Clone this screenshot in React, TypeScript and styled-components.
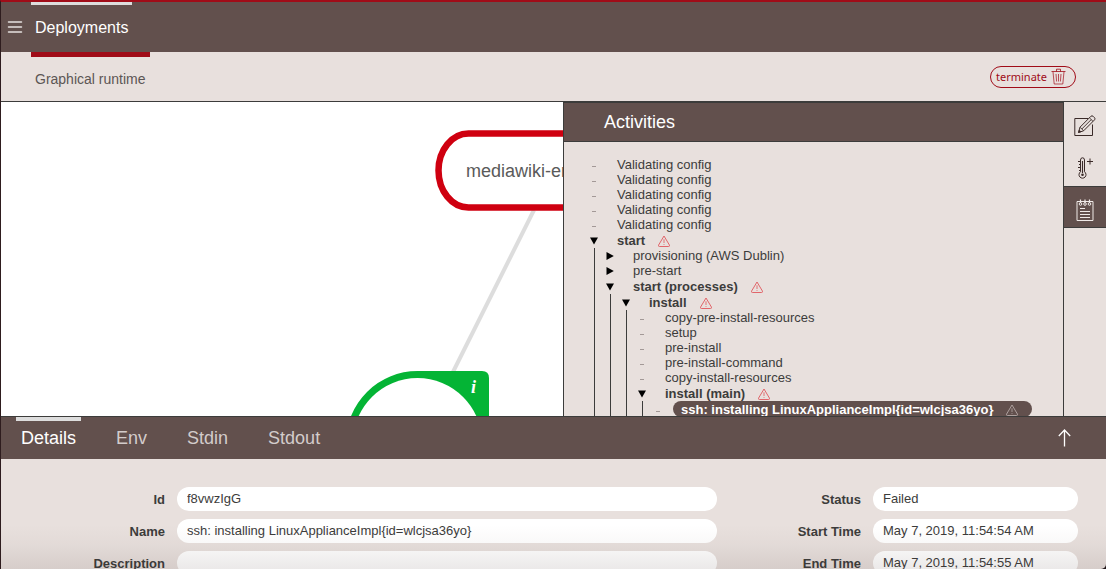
import React from "react";
import styled, { createGlobalStyle, css } from "styled-components";

const brown = "#62504d";
const sand = "#e8e0dd";
const line = "#3c3c3b";
const red = "#a00c18";

const GlobalStyle = createGlobalStyle`
  * { box-sizing: border-box; }
  html { background: #1d1416; }
  body { margin: 0; overflow: hidden; }
  body, button, input { font-family: "Liberation Sans", Arial, sans-serif; }
  button { margin: 0; padding: 0; border: 0; background: none; color: inherit; cursor: pointer; }
  ul { list-style: none; margin: 0; padding: 0; }
  svg { display: block; flex: none; }
`;

const Page = styled.div`
  display: grid;
  grid-template-rows: auto auto minmax(0, 1fr) 153px;
  height: 100vh;
  overflow: hidden;
  border-top: 2px solid ${red};
  border-left: 1px solid #2e1c1e;
  border-bottom-right-radius: 5px;
  background: ${sand};
  color: ${line};
`;

const TopBar = styled.header`
  display: flex;
  height: 50px;
  background: ${brown};
  color: #fff;
`;

const MenuButton = styled.button`
  width: 30px;
  padding-left: 6px;
`;

const NavLink = styled.a`
  padding: 0 4px;
  border-top: 3px solid #ddd;
  font-size: 16px;
  line-height: 46px;
  color: #fff;
  text-decoration: none;
`;

const SubBar = styled.nav`
  display: flex;
  justify-content: space-between;
  height: 50px;
  padding: 0 30px;
  border-bottom: 1px solid ${line};
`;

const SubLink = styled.a`
  padding: 0 4px;
  border-top: 5px solid ${red};
  font-size: 14px;
  line-height: 44px;
  color: #5c5654;
  text-decoration: none;
`;

const TerminateButton = styled.button`
  display: flex;
  align-items: center;
  align-self: center;
  gap: 4px;
  height: 22px;
  padding: 0 9px 0 5px;
  border: 1px solid ${red};
  border-radius: 11px;
  color: ${red};
  font-family: "Noto Sans", sans-serif;
  font-size: 11px;
`;

const Workspace = styled.main`
  display: grid;
  grid-template-columns: minmax(0, 1fr) 501px 42px;
  min-height: 0;
`;

const Canvas = styled.section`
  overflow: hidden;
  background: #fff;
`;

const Activities = styled.section`
  overflow: hidden;
  border: 1px solid ${line};
  border-bottom: 0;
`;

const ActivitiesTitle = styled.h2`
  margin: 0;
  padding-left: 40px;
  border-bottom: 1px solid ${line};
  background: ${brown};
  color: #fff;
  font-size: 18px;
  font-weight: 400;
  line-height: 38px;
`;

const Tree = styled.ul`
  padding: 15px 0 0 26px;
`;

const Branch = styled.ul`
  margin-left: 4px;
  padding-left: 11px;
  border-left: 1px solid ${line};
`;

const Row = styled.div<{ $alert?: boolean }>`
  display: flex;
  align-items: flex-end;
  height: ${(p) => (p.$alert ? 16 : 15)}px;
  font-size: 13px;
  font-weight: ${(p) => (p.$alert ? 700 : 400)};
  line-height: 15px;
  white-space: nowrap;
`;

const Marker = styled.span`
  display: flex;
  align-items: center;
  justify-content: center;
  width: 8px;
  height: 15px;
  color: #8f8583;
  font-weight: 400;
`;

const Label = styled.span<{ $selected?: boolean }>`
  display: flex;
  align-items: center;
  gap: 13px;
  height: 15px;
  margin-left: 19px;
  ${(p) =>
    p.$selected &&
    css`
      height: 16px;
      margin-left: 11px;
      padding: 0 14px 0 8px;
      border-radius: 8px;
      background: ${brown};
      color: #fff;
    `}
`;

const ToolRail = styled.aside`
  display: flex;
  flex-direction: column;
`;

const ToolButton = styled.button<{ $active?: boolean }>`
  display: flex;
  align-items: center;
  justify-content: center;
  height: 42px;
  padding-top: 6px;
  color: #3a2a28;
  ${(p) =>
    p.$active &&
    css`
      border: solid ${line};
      border-width: 1px 0;
      background: ${brown};
      color: #f0eae8;
    `}
`;

const Drawer = styled.section`
  position: relative;
  overflow: hidden;
  border-top: 1px solid ${line};
`;

const DrawerBar = styled.div`
  display: flex;
  align-items: stretch;
  gap: 30px;
  height: 42px;
  padding: 0 35px 0 15px;
  background: ${brown};
`;

const Tab = styled.button<{ $active?: boolean }>`
  padding: 0 5px 4px;
  border-top: 4px solid ${(p) => (p.$active ? "#ddd" : "transparent")};
  color: ${(p) => (p.$active ? "#fff" : "#d3cccb")};
  font-size: 18px;
`;

const ExpandButton = styled.button`
  margin-left: auto;
  color: #fff;
`;

const Form = styled.form`
  display: flex;
  padding: 28px 28px 0 0;
`;

const Fields = styled.div<{ $labels: number; $basis?: number }>`
  display: grid;
  flex: ${(p) => (p.$basis ? `0 0 ${p.$basis}px` : "1")};
  grid-template-columns: ${(p) => p.$labels}px minmax(0, 1fr);
  grid-auto-rows: 24px;
  gap: 8px 12px;
  align-content: start;
`;

const FieldLabel = styled.label`
  font-size: 13px;
  font-weight: 700;
  line-height: 26px;
  text-align: right;
`;

const FieldInput = styled.input`
  width: 100%;
  height: 24px;
  padding: 0 10px 2px;
  border: 0;
  border-radius: 12px;
  background: #fff;
  color: ${line};
  font-size: 13px;
`;

const Shade = styled.div`
  position: absolute;
  inset: auto 0 0;
  height: 44px;
  background: linear-gradient(rgba(60, 40, 36, 0), rgba(60, 40, 36, 0.03) 45%, rgba(60, 40, 36, 0.1));
  pointer-events: none;
`;

const WarningIcon = ({ color = "#e0575c" }: { color?: string }) => (
  <svg width="12" height="13" viewBox="0 0 12 13" fill="none" stroke={color} strokeLinejoin="round">
    <path d="M6 2 L11.5 11.2 Q11.7 12.5 10.7 12.5 H1.3 Q.3 12.5 .5 11.2 Z" strokeWidth=".9" />
    <path d="M6 5.3 V9 M6 10.2 V11" strokeWidth=".8" />
  </svg>
);

const Triangle = ({ open }: { open: boolean }) => (
  <svg width="8" height="8" viewBox="0 0 8 8" fill="#000">
    <path d={open ? "M0 .5 H8 L4 7.5 Z" : "M.5 0 V8 L7.8 4 Z"} />
  </svg>
);

const Dash = () => (
  <svg width="8" height="8" viewBox="0 0 8 8" stroke="#a39997">
    <path d="M2 5.5 H6" />
  </svg>
);

const TrashIcon = () => (
  <svg width="15" height="17" viewBox="0 0 15 17" fill="none" stroke={red}>
    <path d="M.5 3.5 H14.5 M5.5 3.5 V1.2 H9.5 V3.5" strokeWidth=".8" />
    <path d="M2 3.8 L3.2 16 H11.8 L13 3.8 M5 6 L5.6 13.5 M7.5 6 V13.5 M10 6 L9.4 13.5" strokeWidth=".7" />
  </svg>
);

const EditIcon = () => (
  <svg width="22" height="22" viewBox="0 0 22 22" fill="none" stroke="currentColor" strokeWidth="1">
    <path d="M14 3.5 H.8 V20.5 H18.5 V9.5" />
    <path d="M4.5 17.5 L6 12.2 L17 1.2 Q18 .4 19 1.2 L20.6 2.8 Q21.4 3.8 20.6 4.8 L9.6 15.8 Z" />
    <path d="M6 12.2 L9.6 15.8 M15.4 2.8 L19 6.4 M7.8 14 L17.2 4.6" strokeWidth=".9" />
    <path d="M4.5 17.5 L5.2 15 L7 16.8 Z" fill="currentColor" strokeWidth=".6" />
  </svg>
);

const ThermometerIcon = () => (
  <svg width="18" height="22" viewBox="0 0 18 22" fill="none" stroke="currentColor" strokeWidth="1">
    <path d="M4.5 14.8 V3 Q4.5 .8 6.5 .8 Q8.5 .8 8.5 3 V14.8 A3.5 3.5 0 1 1 4.5 14.8 Z" />
    <path d="M6.5 4 V16" strokeWidth="1.1" />
    <path d="M2 4.5 H4.5 M3 7.5 H4.5 M2 10.5 H4.5 M3 13.5 H4.5 M11 4.5 H17 M14 1.5 V7.5" />
    <circle cx="6.5" cy="17.8" r="1.3" fill="currentColor" stroke="none" />
  </svg>
);

const NotepadIcon = () => (
  <svg width="18" height="22" viewBox="0 0 18 22" fill="none" stroke="currentColor" strokeWidth="1">
    <path d="M1 2.5 H17 V21.5 H1 Z" />
    <path d="M4 9.5 H9 M4 12.5 H14 M4 15.5 H14 M4 18.5 H14" />
    <path d="M4.5 4 V.5 M9 4 V.5 M13.5 4 V.5" strokeWidth="1.2" />
    <circle cx="4.5" cy="5" r="1.3" />
    <circle cx="9" cy="5" r="1.3" />
    <circle cx="13.5" cy="5" r="1.3" />
  </svg>
);

const RuntimeGraph = () => (
  <svg width="700" height="420" viewBox="1 102 700 420" role="img" aria-label="Graphical runtime">
    <path d="M534 210 L453 372" stroke="#ddd" strokeWidth="4" />
    <rect x="438.5" y="133.5" width="240" height="74" rx="30" ry="37" fill="#fff" stroke="#cf0010" strokeWidth="6.5" />
    <text x="466" y="177" fontFamily="Liberation Sans, Arial, sans-serif" fontSize="18" fill="#5a5a5a">
      mediawiki-entity
    </text>
    <path d="M417.5 371 H482 Q489 371 489 378 V443 A71.5 71.5 0 1 1 417.5 371 Z" fill="#04b435" />
    <circle cx="417.5" cy="442.5" r="64.5" fill="#fff" />
    <text x="471" y="393" fontFamily="Liberation Serif, serif" fontSize="18" fontStyle="italic" fontWeight="700" fill="#fff">
      i
    </text>
  </svg>
);

type Activity = { name: string; alert?: boolean; selected?: boolean; closed?: boolean; children?: Activity[] };

const activities: Activity[] = [
  ...Array.from({ length: 5 }, () => ({ name: "Validating config" })),
  {
    name: "start",
    alert: true,
    children: [
      { name: "provisioning (AWS Dublin)", closed: true },
      { name: "pre-start", closed: true },
      {
        name: "start (processes)",
        alert: true,
        children: [
          {
            name: "install",
            alert: true,
            children: [
              { name: "copy-pre-install-resources" },
              { name: "setup" },
              { name: "pre-install" },
              { name: "pre-install-command" },
              { name: "copy-install-resources" },
              {
                name: "install (main)",
                alert: true,
                children: [{ name: "ssh: installing LinuxApplianceImpl{id=wlcjsa36yo}", alert: true, selected: true }],
              },
            ],
          },
        ],
      },
    ],
  },
];

const ActivityItem = ({ item }: { item: Activity }) => (
  <li>
    <Row $alert={item.alert}>
      <Marker>{item.children || item.closed ? <Triangle open={!item.closed} /> : <Dash />}</Marker>
      <Label $selected={item.selected}>
        {item.name}
        {item.alert && <WarningIcon color={item.selected ? "#b5a9a7" : undefined} />}
      </Label>
    </Row>
    {item.children && (
      <Branch>
        {item.children.map((child) => (
          <ActivityItem key={child.name} item={child} />
        ))}
      </Branch>
    )}
  </li>
);

const Field = ({ label, value }: { label: string; value: string }) => {
  const id = label.toLowerCase().replace(" ", "-");
  return (
    <>
      <FieldLabel htmlFor={id}>{label}</FieldLabel>
      <FieldInput id={id} value={value} readOnly />
    </>
  );
};

export default function App() {
  return (
    <Page>
      <GlobalStyle />
      <TopBar>
        <MenuButton aria-label="Menu">
          <svg width="16" height="12" viewBox="0 0 16 12" stroke="#e6e1e0" strokeWidth="1.5" strokeLinecap="round">
            <path d="M1.5 1 H14.5 M1.5 6 H14.5 M1.5 11 H14.5" />
          </svg>
        </MenuButton>
        <NavLink href="#deployments">Deployments</NavLink>
      </TopBar>
      <SubBar>
        <SubLink href="#runtime">Graphical runtime</SubLink>
        <TerminateButton>
          terminate
          <TrashIcon />
        </TerminateButton>
      </SubBar>
      <Workspace>
        <Canvas>
          <RuntimeGraph />
        </Canvas>
        <Activities>
          <ActivitiesTitle>Activities</ActivitiesTitle>
          <Tree>
            {activities.map((item, i) => (
              <ActivityItem key={i} item={item} />
            ))}
          </Tree>
        </Activities>
        <ToolRail>
          <ToolButton aria-label="Edit"><EditIcon /></ToolButton>
          <ToolButton aria-label="Add sensor"><ThermometerIcon /></ToolButton>
          <ToolButton aria-label="Activities" $active><NotepadIcon /></ToolButton>
        </ToolRail>
      </Workspace>
      <Drawer>
        <DrawerBar>
          <Tab $active>Details</Tab>
          <Tab>Env</Tab>
          <Tab>Stdin</Tab>
          <Tab>Stdout</Tab>
          <ExpandButton aria-label="Expand">
            <svg width="13" height="18" viewBox="0 0 13 18" fill="none" stroke="currentColor" strokeWidth="1.3">
              <path d="M6.5 17.5 V1 M.8 7 L6.5 1 L12.2 7" />
            </svg>
          </ExpandButton>
        </DrawerBar>
        <Form>
          <Fields $labels={164}>
            <Field label="Id" value="f8vwzIgG" />
            <Field label="Name" value="ssh: installing LinuxApplianceImpl{id=wlcjsa36yo}" />
            <Field label="Description" value="" />
          </Fields>
          <Fields $labels={144} $basis={361}>
            <Field label="Status" value="Failed" />
            <Field label="Start Time" value="May 7, 2019, 11:54:54 AM" />
            <Field label="End Time" value="May 7, 2019, 11:54:55 AM" />
          </Fields>
        </Form>
        <Shade />
      </Drawer>
    </Page>
  );
}
